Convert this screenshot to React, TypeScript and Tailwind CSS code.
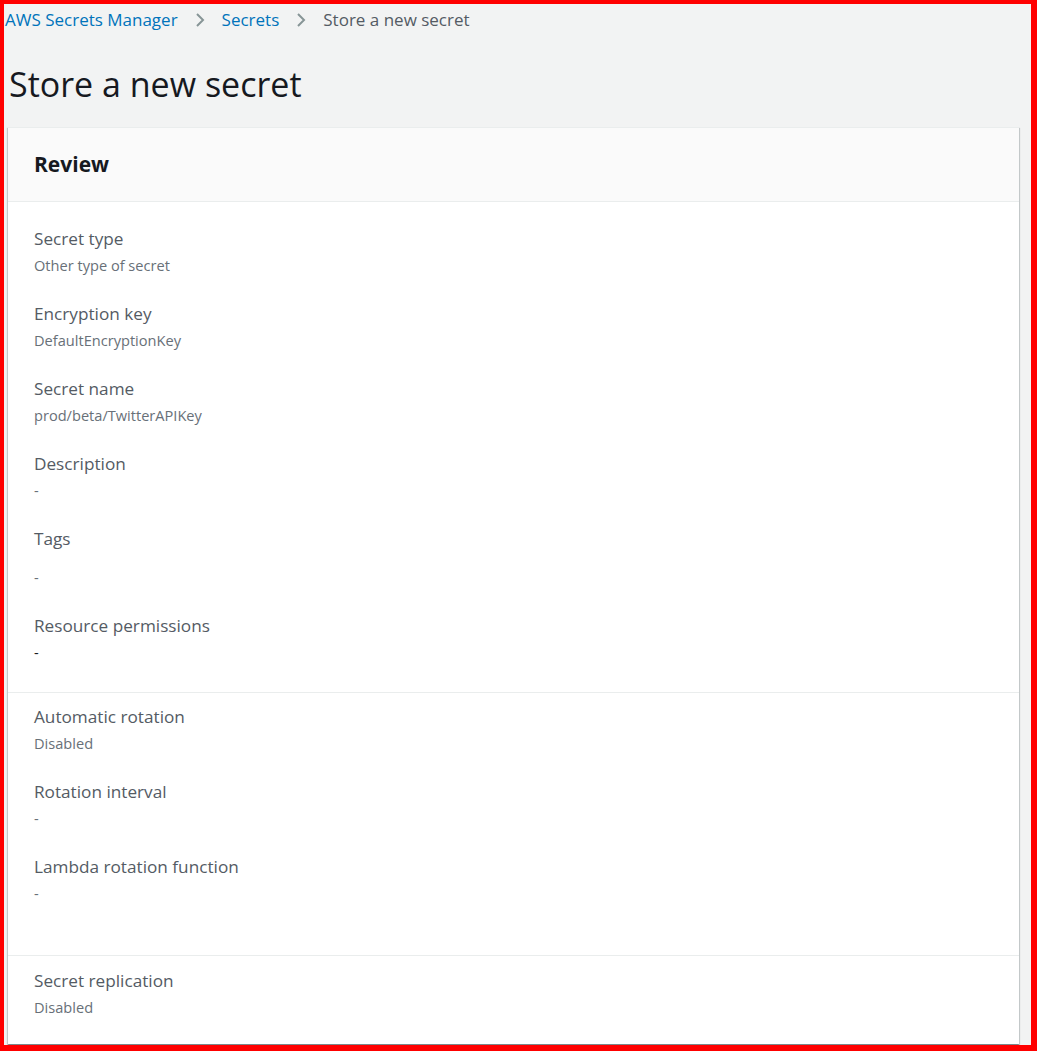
import React from "react";

type Item = { label: string; value: string; gap?: string; color?: string };

const section1: Item[] = [
  { label: "Secret type", value: "Other type of secret" },
  { label: "Encryption key", value: "DefaultEncryptionKey" },
  { label: "Secret name", value: "prod/beta/TwitterAPIKey" },
  { label: "Description", value: "-" },
  { label: "Tags", value: "-", gap: "mt-[14px]" },
  { label: "Resource permissions", value: "-", color: "text-[#16191f]" },
];

const section2: Item[] = [
  { label: "Automatic rotation", value: "Disabled" },
  { label: "Rotation interval", value: "-" },
  { label: "Lambda rotation function", value: "-" },
];

const section3: Item[] = [{ label: "Secret replication", value: "Disabled" }];

function Field({ item }: { item: Item }) {
  return (
    <div className="flex flex-col">
      <div className="h-6 leading-6 text-[17.2px] text-[#545b64]">{item.label}</div>
      <div
        className={
          "h-6 leading-6 text-[14.6px] " +
          (item.gap ?? "mt-[2px]") +
          " " +
          (item.color ?? "text-[#687078]")
        }
      >
        {item.value}
      </div>
    </div>
  );
}

function Chevron() {
  return (
    <svg width="16" height="16" viewBox="0 0 16 16" className="mx-[14px]">
      <path d="M5 2l6 6-6 6" fill="none" stroke="#879596" strokeWidth="2" />
    </svg>
  );
}

export default function App() {
  return (
    <div
      className="w-[1037px] h-[1051px] border-solid border-[#ff0000] border-l-4 border-t-4 border-r-[6px] border-b-[6px] bg-[#f2f3f3] overflow-hidden"
      style={{ fontFamily: '"Open Sans", "Noto Sans", sans-serif' }}
    >
      {/* breadcrumb */}
      <nav className="flex items-center h-8 pl-[1px] text-[17px]">
        <span className="text-[#0073bb]">AWS Secrets Manager</span>
        <Chevron />
        <span className="text-[#0073bb]">Secrets</span>
        <Chevron />
        <span className="text-[#545b64]">Store a new secret</span>
      </nav>

      <h1 className="pl-[5px] mt-[26px] h-[44px] leading-[44px] text-[34px] text-[#16191f]">Store a new secret</h1>

      <div className="ml-[4px] mr-[12px] mt-[21px] bg-white border-t border-[#eaeded] shadow-[0_1px_1px_0_rgba(0,28,36,0.3),1px_1px_1px_0_rgba(0,28,36,0.15),-1px_1px_1px_0_rgba(0,28,36,0.15)]">
        <div className="h-[74px] flex items-center px-[26px] bg-[#fafafa] border-b border-[#eaeded]">
          <h2 className="text-[21px] font-bold text-[#16191f]">Review</h2>
        </div>

        <div className="px-[26px] pt-[25px] pb-[28px] flex flex-col gap-[25px] border-b border-[#eaeded]">
          {section1.map((it) => (
            <Field key={it.label} item={it} />
          ))}
        </div>

        <div className="px-[26px] pt-[12px] pb-[50px] flex flex-col gap-[25px] border-b border-[#eaeded]">
          {section2.map((it) => (
            <Field key={it.label} item={it} />
          ))}
        </div>

        <div className="px-[26px] pt-[13px] pb-[25px] flex flex-col gap-[25px]">
          {section3.map((it) => (
            <Field key={it.label} item={it} />
          ))}
        </div>
      </div>
    </div>
  );
}
